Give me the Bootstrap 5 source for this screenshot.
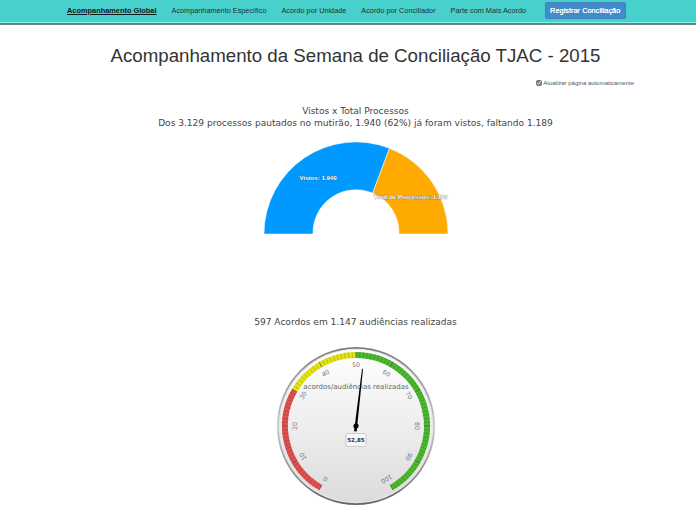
<!DOCTYPE html>
<html lang="pt"><head><meta charset="utf-8"><title>Acompanhamento</title>
<link href="https://cdn.jsdelivr.net/npm/bootstrap@5.3.0/dist/css/bootstrap.min.css" rel="stylesheet">
<style>
body{background:#fff;color:#333;font-family:"Liberation Sans",Arial,sans-serif;overflow:hidden}
.topbar{background:#48d1cc;height:25px;padding:0;border-bottom:2px solid #6f7f7e;box-shadow:inset 0 -1px 0 #7ff0ea;align-items:flex-start;flex-wrap:nowrap;justify-content:flex-start}
.topbar .nav-link{font-size:7.3px;line-height:9px;color:#243030;padding:0;white-space:nowrap;margin-top:6px}
.topbar .nav-link.active{color:#0b1a1a;font-weight:700;text-decoration:underline;font-size:7.4px}
.navitems{margin-left:67px;gap:15px}
.btn-reg{background:#428bca;border:1px solid #3f83bd;color:#fff;font-size:7.4px;font-weight:400;line-height:9px;padding:3px 0;width:81px;height:17px;border-radius:2px;margin-left:18.700px;margin-top:2px;white-space:nowrap;text-shadow:0 0 .4px #fff}
.pagebody{padding-left:15px}
.pagetitle{font-size:18.7px;font-weight:400;text-align:center;margin:20px 0 0;line-height:22px;color:#333}
.autorow{font-size:6px;color:#555;line-height:8px;margin-top:12px;padding-right:62px}
.autorow input{width:6px;height:6px;margin:0 1px 0 0;vertical-align:-1px;accent-color:#777}
.charthead{font-family:"DejaVu Sans",Verdana,sans-serif;font-size:9.05px;line-height:11.5px;color:#444;text-align:center}
.firsthead{margin-top:19px}
.secondhead{margin-top:73px}
.svgwrap{display:flex;justify-content:center}
.svgwrap svg{display:block;flex:none}
.donut{margin-top:13px}
.gaugebox{margin-top:12px}
.slab{font-family:"Liberation Sans",Arial,sans-serif;font-weight:700;font-size:6.100px;fill:#fff;stroke:#444;stroke-width:.35px;paint-order:stroke}
.glab{font-family:"DejaVu Sans",Verdana,sans-serif;font-size:6.3px;fill:#777;text-anchor:middle}
.gtitle{font-family:"DejaVu Sans",Verdana,sans-serif;font-size:7px;fill:#666;text-anchor:middle}
.gval{font-family:"DejaVu Sans",Verdana,sans-serif;font-size:5.500px;font-weight:700;fill:#333;text-anchor:middle}
</style></head>
<body>
<nav class="navbar topbar">
  <ul class="nav navitems flex-nowrap">
    <li class="nav-item"><a class="nav-link active" href="#">Acompanhamento Global</a></li>
    <li class="nav-item"><a class="nav-link" href="#">Acompanhamento Específico</a></li>
    <li class="nav-item"><a class="nav-link" href="#">Acordo por Unidade</a></li>
    <li class="nav-item"><a class="nav-link" href="#">Acordo por Conciliador</a></li>
    <li class="nav-item"><a class="nav-link" href="#">Parte com Mais Acordo</a></li>
  </ul>
  <button type="button" class="btn btn-reg">Registrar Conciliação</button>
</nav>
<main class="pagebody">
<h1 class="pagetitle">Acompanhamento da Semana de Conciliação TJAC - 2015</h1>
<div class="autorow d-flex justify-content-end align-items-center"><label><input type="checkbox" checked>Atualizar página automaticamente</label></div>
<div class="charthead firsthead">Vistos x Total Processos<br>Dos 3.129 processos pautados no mutirão, 1.940 (62%) já foram vistos, faltando 1.189</div>
<div class="svgwrap donut">
<svg width="200" height="102" viewBox="0 0 200 102">
  <path d="M8 92A92 92 0 0 1 133.500 6.300L116.700 51.100A43 43 0 0 0 57 92Z" fill="#0099ff" stroke="#fff" stroke-width=".5"/>
  <path d="M133.500 6.300A92 92 0 0 1 192 92H143A43 43 0 0 0 116.700 51.100Z" fill="#ffaa00" stroke="#fff" stroke-width=".5"/>
  <text class="slab" x="43.500" y="38">Vistos: 1.940</text>
  <text class="slab" x="117.500" y="57">Total de Processos: 1.189</text>
</svg>
</div>
<div class="charthead secondhead">597 Acordos em 1.147 audiências realizadas</div>
<div class="svgwrap gaugebox">
<svg id="gauge" width="170" height="170" viewBox="-85 -85 170 170">
  <defs>
    <linearGradient id="face" x1="0" y1="0" x2="0" y2="1"><stop offset="0" stop-color="#fff"/><stop offset="1" stop-color="#dcdcdc"/></linearGradient>
    <linearGradient id="rim" x1="0" y1="0" x2="0" y2="1"><stop offset="0" stop-color="#7a7a7a"/><stop offset=".5" stop-color="#c9c9c9"/><stop offset="1" stop-color="#666"/></linearGradient>
  </defs>
  <circle r="79" fill="url(#rim)"/>
  <circle r="77.300" fill="#e6e6e6"/>
  <circle r="76" fill="url(#face)"/>
  <g id="scale"></g>
  <text class="gtitle" x="0" y="-37">acordos/audiências realizadas</text>
  <g transform="rotate(6.500)">
    <path d="M-1.300 5.500L-.5 -57.500L.5 -57.500L1.300 5.500Z" fill="#000"/>
    <circle r="2.600" fill="#000"/>
  </g>
  <rect x="-10" y="7.500" width="20" height="13" rx="1.500" fill="#f7f7f7" stroke="#bbb" stroke-width=".7"/>
  <text class="gval" x="0" y="16">52,85</text>
</svg>
</div>
</main>
<script>
(function(){
  var ns='http://www.w3.org/2000/svg',g=document.getElementById('scale');
  function el(n,a,t){var e=document.createElementNS(ns,n);for(var k in a)e.setAttribute(k,a[k]);if(t)e.textContent=t;g.appendChild(e);}
  function pt(r,d){var a=d*Math.PI/180;return [r*Math.sin(a),-r*Math.cos(a)];}
  function arc(v0,v1,c){var a=(v0-50)*3,b=(v1-50)*3,p=pt(71,a),q=pt(71,b);
    el('path',{d:'M'+p[0]+' '+p[1]+'A71 71 0 '+(b-a>180?1:0)+' 1 '+q[0]+' '+q[1],fill:'none',stroke:c,'stroke-width':6});}
  arc(0,30,'#e0504f');arc(30,50,'#e3e312');arc(50,100,'#4cb82e');
  for(var i=0;i<=100;i++){
    var d=(i-50)*3,big=i%10===0,p=pt(74,d),q=pt(68,d);
    el('line',{x1:p[0],y1:p[1],x2:q[0],y2:q[1],stroke:big?'#555':'#000','stroke-opacity':big?.8:.22,'stroke-width':big?1:.7});
    if(big){var l=pt(61,d);el('text',{'class':'glab',x:l[0],y:l[1]+2.200,transform:'rotate('+d+' '+l[0]+' '+l[1]+')'},String(i));}
  }
})();
</script>
<script src="https://cdn.jsdelivr.net/npm/bootstrap@5.3.0/dist/js/bootstrap.bundle.min.js"></script>
</body></html>
